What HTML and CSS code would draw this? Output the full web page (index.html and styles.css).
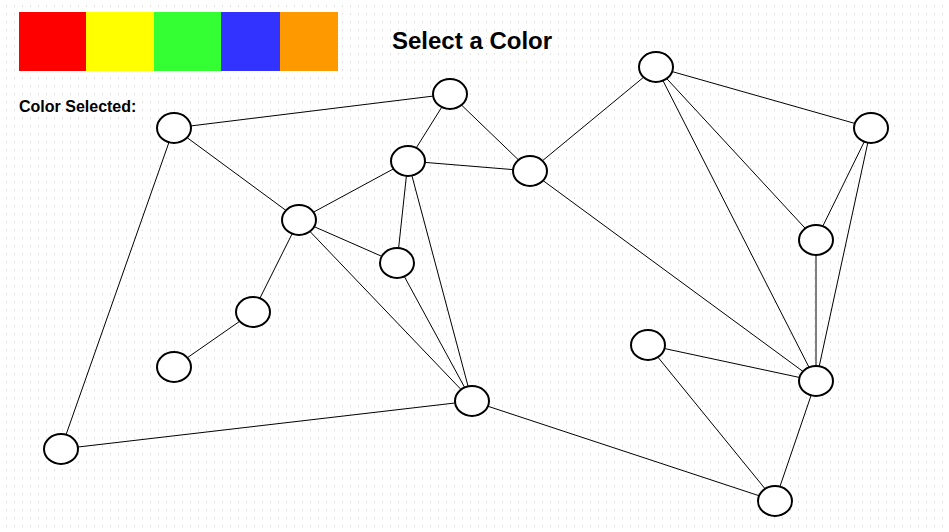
FILE: index.html
```html
<!DOCTYPE html>
<html lang="en">
<head>
  <meta charset="UTF-8" />
  <title>Graph Coloring</title>
  <link rel="stylesheet" href="styles.css">
</head>
<body>
  <div class="board">
    <svg class="graph" width="949" height="532" viewBox="0 0 949 532">
      <g class="edges">
        <line x1="174" y1="128" x2="450" y2="94" />
        <line x1="174" y1="128" x2="299" y2="220" />
        <line x1="174" y1="128" x2="61" y2="449" />
        <line x1="450" y1="94" x2="408" y2="161" />
        <line x1="450" y1="94" x2="530" y2="171" />
        <line x1="408" y1="161" x2="530" y2="171" />
        <line x1="408" y1="161" x2="299" y2="220" />
        <line x1="408" y1="161" x2="397" y2="263" />
        <line x1="408" y1="161" x2="472" y2="401" />
        <line x1="299" y1="220" x2="397" y2="263" />
        <line x1="299" y1="220" x2="472" y2="401" />
        <line x1="299" y1="220" x2="253" y2="312" />
        <line x1="253" y1="312" x2="174" y2="367" />
        <line x1="397" y1="263" x2="472" y2="401" />
        <line x1="61" y1="449" x2="472" y2="401" />
        <line x1="472" y1="401" x2="775" y2="501" />
        <line x1="530" y1="171" x2="656" y2="67" />
        <line x1="530" y1="171" x2="816" y2="381" />
        <line x1="656" y1="67" x2="871" y2="128" />
        <line x1="656" y1="67" x2="816" y2="240" />
        <line x1="656" y1="67" x2="816" y2="381" />
        <line x1="871" y1="128" x2="816" y2="240" />
        <line x1="871" y1="128" x2="816" y2="381" />
        <line x1="816" y1="240" x2="816" y2="381" />
        <line x1="648" y1="345" x2="816" y2="381" />
        <line x1="648" y1="345" x2="775" y2="501" />
        <line x1="816" y1="381" x2="775" y2="501" />
      </g>
      <g class="nodes">
        <ellipse cx="174" cy="128" rx="17" ry="15" />
        <ellipse cx="450" cy="94" rx="17" ry="15" />
        <ellipse cx="656" cy="67" rx="17" ry="15" />
        <ellipse cx="871" cy="128" rx="17" ry="15" />
        <ellipse cx="408" cy="161" rx="17" ry="15" />
        <ellipse cx="530" cy="171" rx="17" ry="15" />
        <ellipse cx="299" cy="220" rx="17" ry="15" />
        <ellipse cx="816" cy="240" rx="17" ry="15" />
        <ellipse cx="397" cy="263" rx="17" ry="15" />
        <ellipse cx="253" cy="312" rx="17" ry="15" />
        <ellipse cx="174" cy="367" rx="17" ry="15" />
        <ellipse cx="648" cy="345" rx="17" ry="15" />
        <ellipse cx="816" cy="381" rx="17" ry="15" />
        <ellipse cx="472" cy="401" rx="17" ry="15" />
        <ellipse cx="61" cy="449" rx="17" ry="15" />
        <ellipse cx="775" cy="501" rx="17" ry="15" />
      </g>
    </svg>

    <div class="top">
      <div class="palette">
        <div class="swatch red" data-color="#ff0000"></div>
        <div class="swatch yellow" data-color="#ffff00"></div>
        <div class="swatch green" data-color="#33ff33"></div>
        <div class="swatch blue" data-color="#3333ff"></div>
        <div class="swatch orange" data-color="#ff9900"></div>
      </div>
      <h1 class="title">Select a Color</h1>
    </div>
    <div class="selected">Color Selected: <span id="chosen"></span></div>
  </div>

  <script>
    let picked = null;
    const chosen = document.getElementById('chosen');

    document.querySelectorAll('.swatch').forEach(s => {
      s.addEventListener('click', () => {
        picked = s.dataset.color;
        chosen.style.background = picked;
        chosen.classList.add('on');
      });
    });
    document.querySelectorAll('.nodes ellipse').forEach(n => {
      n.addEventListener('click', () => { if (picked) n.style.fill = picked; });
    });
  </script>
</body>
</html>
```

FILE: styles.css
```css
body {
  margin: 0;
  font-family: "Liberation Sans", Arial, sans-serif;
  color: #000;
  background-color: #e3e3e3;
  background-image:
    linear-gradient(#fff 5px, transparent 5px, transparent 7px, #fff 7px),
    linear-gradient(90deg, #fff 6px, transparent 6px, transparent 7px, #fff 7px);
  background-size: 8px 8px;
}
.board {
  position: relative;
  width: 949px;
  height: 532px;
  overflow: hidden;
}
.graph {
  position: absolute;
  left: 0;
  top: 0;
}
.edges line {
  stroke: #000;
  stroke-width: 1;
}
.nodes ellipse {
  fill: #fff;
  stroke: #000;
  stroke-width: 2;
  cursor: pointer;
}
.top {
  position: relative;
  display: flex;
  align-items: flex-start;
  padding: 12px 0 0 19px;
}
.palette {
  display: flex;
  height: 59px;
}
.swatch { height: 100%; cursor: pointer; }
.swatch.red { width: 67px; background: #ff0000; }
.swatch.yellow { width: 68px; background: #ffff00; }
.swatch.green { width: 67px; background: #33ff33; }
.swatch.blue { width: 59px; background: #3333ff; }
.swatch.orange { width: 58px; background: #ff9900; }
.title {
  margin: 15px 0 0 54px;
  font-size: 24px;
  font-weight: bold;
}
.selected {
  position: relative;
  display: inline-flex;
  align-items: center;
  gap: 6px;
  margin: 27px 0 0 19px;
  font-size: 16px;
  font-weight: bold;
}
#chosen.on {
  width: 16px;
  height: 16px;
}
```
